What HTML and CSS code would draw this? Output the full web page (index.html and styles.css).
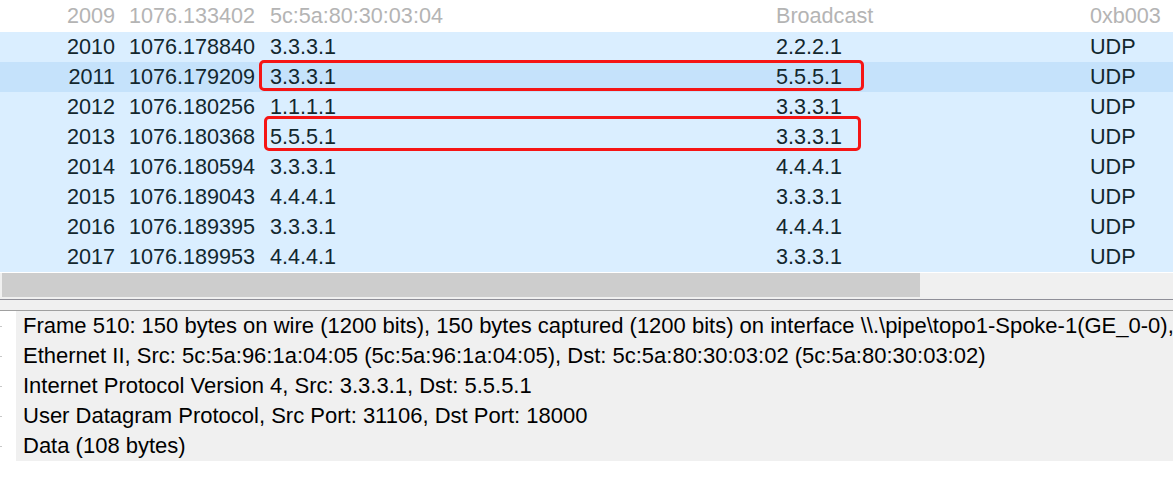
FILE: index.html
```html
<!DOCTYPE html>
<html>
<head>
<meta charset="utf-8">
<link rel="stylesheet" href="styles.css">
</head>
<body>
<div class="app">
  <div class="list">
    <div class="row ignored first"><span class="no">2009</span><span class="time">1076.133402</span><span class="src">5c:5a:80:30:03:04</span><span class="dst">Broadcast</span><span class="proto">0xb003</span></div>
    <div class="row udp"><span class="no">2010</span><span class="time">1076.178840</span><span class="src">3.3.3.1</span><span class="dst">2.2.2.1</span><span class="proto">UDP</span></div>
    <div class="row udp selected"><span class="no">2011</span><span class="time">1076.179209</span><span class="src">3.3.3.1</span><span class="dst">5.5.5.1</span><span class="proto">UDP</span></div>
    <div class="row udp"><span class="no">2012</span><span class="time">1076.180256</span><span class="src">1.1.1.1</span><span class="dst">3.3.3.1</span><span class="proto">UDP</span></div>
    <div class="row udp"><span class="no">2013</span><span class="time">1076.180368</span><span class="src">5.5.5.1</span><span class="dst">3.3.3.1</span><span class="proto">UDP</span></div>
    <div class="row udp"><span class="no">2014</span><span class="time">1076.180594</span><span class="src">3.3.3.1</span><span class="dst">4.4.4.1</span><span class="proto">UDP</span></div>
    <div class="row udp"><span class="no">2015</span><span class="time">1076.189043</span><span class="src">4.4.4.1</span><span class="dst">3.3.3.1</span><span class="proto">UDP</span></div>
    <div class="row udp"><span class="no">2016</span><span class="time">1076.189395</span><span class="src">3.3.3.1</span><span class="dst">4.4.4.1</span><span class="proto">UDP</span></div>
    <div class="row udp"><span class="no">2017</span><span class="time">1076.189953</span><span class="src">4.4.4.1</span><span class="dst">3.3.3.1</span><span class="proto">UDP</span></div>
    <div class="mark mark1"></div>
    <div class="mark mark2"></div>
  </div>
  <div class="hscroll"><div class="thumb"></div></div>
  <div class="splitter"></div>
  <div class="tree">
    <div class="titem"><span class="tick"></span><span class="tlabel">Frame 510: 150 bytes on wire (1200 bits), 150 bytes captured (1200 bits) on interface \\.\pipe\topo1-Spoke-1(GE_0-0),</span></div>
    <div class="titem"><span class="tick"></span><span class="tlabel">Ethernet II, Src: 5c:5a:96:1a:04:05 (5c:5a:96:1a:04:05), Dst: 5c:5a:80:30:03:02 (5c:5a:80:30:03:02)</span></div>
    <div class="titem"><span class="tick"></span><span class="tlabel">Internet Protocol Version 4, Src: 3.3.3.1, Dst: 5.5.5.1</span></div>
    <div class="titem"><span class="tick"></span><span class="tlabel">User Datagram Protocol, Src Port: 31106, Dst Port: 18000</span></div>
    <div class="titem"><span class="tick"></span><span class="tlabel">Data (108 bytes)</span></div>
  </div>
</div>
</body>
</html>
```

FILE: styles.css
```css
html, body {
  margin: 0;
  padding: 0;
  background: #ffffff;
  overflow: hidden;
}
.app {
  width: 1173px;
  height: 481px;
  font-family: "Liberation Sans", Arial, sans-serif;
  font-size: 21.6px;
  overflow: hidden;
}
.list {
  position: relative;
  background: #ffffff;
}
.row {
  display: grid;
  grid-template-columns: 115px 155px 506px 314px 1fr;
  height: 30px;
  line-height: 30px;
  white-space: nowrap;
}
.row.first {
  height: 32px;
  line-height: 32px;
}
.row .no { text-align: right; }
.row .time { padding-left: 14px; }
.ignored { color: #b4b4b4; background: #ffffff; }
.udp { color: #12272e; background: #daeeff; }
.udp.selected { background: #c5e2fb; }
.mark {
  position: absolute;
  border: 3px solid #f51515;
  border-radius: 5px;
  box-sizing: border-box;
}
.mark1 { left: 259px; top: 60px; width: 605px; height: 31px; }
.mark2 { left: 264px; top: 116px; width: 597px; height: 35px; }
.hscroll {
  margin-top: 1px;
  height: 24px;
  background: #f0f0f0;
  padding-left: 2px;
  border-bottom: 2px solid #f0f0f0;
}
.thumb {
  width: 918px;
  height: 24px;
  background: #cdcdcd;
}
.splitter {
  height: 10px;
  background: #f0f0f0;
  border-top: 1px solid #8f8f98;
  border-bottom: 1px solid #a0a0a0;
}
.tree {
  display: flex;
  flex-direction: column;
  font-size: 22px;
}
.titem {
  display: flex;
  height: 30px;
  line-height: 30px;
  white-space: nowrap;
  color: #000000;
}
.tick {
  flex: 0 0 16px;
  position: relative;
  background: #ffffff;
}
.tick::before {
  content: "";
  position: absolute;
  left: 0;
  top: 15px;
  width: 2px;
  height: 1px;
  background: #c8c8c8;
}
.tlabel {
  flex: 1;
  background: #f0f0f0;
  padding-left: 7px;
  overflow: hidden;
}
```
